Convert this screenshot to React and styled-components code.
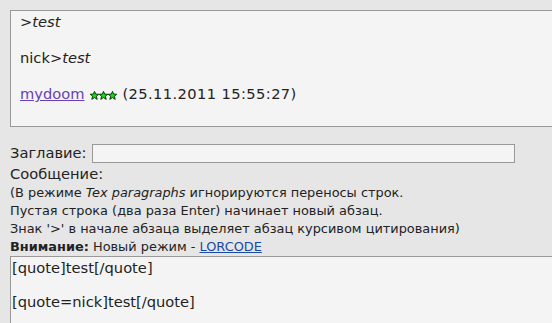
import React from "react";
import styled, { createGlobalStyle } from "styled-components";

const Global = createGlobalStyle`
  html, body { margin: 0; padding: 0; background: #e6e6e6; }
  body { font-family: "DejaVu Sans", sans-serif; font-size: 14.67px; color: #222; overflow: hidden; }
`;

const Page = styled.div`
  width: 552px;
  height: 323px;
  overflow: hidden;
  padding: 10px 0 0 10px;
  box-sizing: border-box;
`;

const Preview = styled.div`
  width: 560px;
  height: 117px;
  box-sizing: border-box;
  background: #f4f4f4;
  border: 1px solid #999;
  padding: 2px 9px 0;
  display: flex;
  flex-direction: column;
  gap: 18px;
`;

const Line = styled.div`
  line-height: 18px;
  white-space: nowrap;
`;

const Em = styled.i``;

const UserLink = styled.a`
  color: #6640b8;
  text-decoration: underline;
`;

const Stars = styled.span`
  display: inline-flex;
  gap: 0;
  margin: 0 5px 0 6px;
  vertical-align: -1px;
`;

const DateText = styled.span`
  letter-spacing: 0.4px;
`;

const Star = () => (
  <svg width="9" height="9" viewBox="0 0 10 10">
    <path d="M5 0.4 L6.3 3.5 L9.7 3.6 L7.1 5.8 L8 9.3 L5 7.3 L2 9.3 L2.9 5.8 L0.3 3.6 L3.7 3.5 Z" fill="#10e010" stroke="#063806" strokeWidth="1.1" strokeLinejoin="round" />
  </svg>
);

const Form = styled.div`
  display: flex;
  flex-direction: column;
  margin-top: 16px;
`;

const Row = styled.div`
  display: flex;
  align-items: center;
  gap: 5px;
  line-height: 20px;
`;

const TitleInput = styled.input`
  width: 423px;
  height: 19px;
  box-sizing: border-box;
  border: 1px solid #999;
  background: #f4f4f4;
  outline: none;
  padding: 0;
`;

const Label = styled.div`
  line-height: 20px;
  margin-top: 1px;
`;

const Hint = styled.div`
  font-size: 12.9px;
  line-height: 18px;
  white-space: nowrap;
`;

const Bold = styled.b``;

const Lor = styled.a`
  color: #1a4aa8;
  text-decoration: underline;
`;

const Editor = styled.textarea`
  display: block;
  margin-top: 0;
  width: 560px;
  height: 80px;
  box-sizing: border-box;
  background: #f4f4f4;
  border: 1px solid #999;
  border-right: none;
  font-family: "DejaVu Sans", sans-serif;
  font-size: 14.67px;
  line-height: 17px;
  color: #222;
  padding: 2px 1px;
  resize: none;
  outline: none;
`;

export default function App() {
  return (
    <>
      <Global />
      <Page>
        <Preview>
          <Line>
            <Em>&gt;test</Em>
          </Line>
          <Line>
            nick&gt;<Em>test</Em>
          </Line>
          <Line>
            <UserLink href="#">mydoom</UserLink>
            <Stars>
              <Star />
              <Star />
              <Star />
            </Stars>
            <DateText>(25.11.2011 15:55:27)</DateText>
          </Line>
        </Preview>
        <Form>
          <Row>
            Заглавие:
            <TitleInput />
          </Row>
          <Label>Сообщение:</Label>
          <Hint>
            (В режиме <Em>Tex paragraphs</Em> игнорируются переносы строк.
          </Hint>
          <Hint>Пустая строка (два раза Enter) начинает новый абзац.</Hint>
          <Hint>Знак '&gt;' в начале абзаца выделяет абзац курсивом цитирования)</Hint>
          <Hint>
            <Bold>Внимание:</Bold> Новый режим - <Lor href="#">LORCODE</Lor>
          </Hint>
          <Editor defaultValue={"[quote]test[/quote]\n\n[quote=nick]test[/quote]"} />
        </Form>
      </Page>
    </>
  );
}
